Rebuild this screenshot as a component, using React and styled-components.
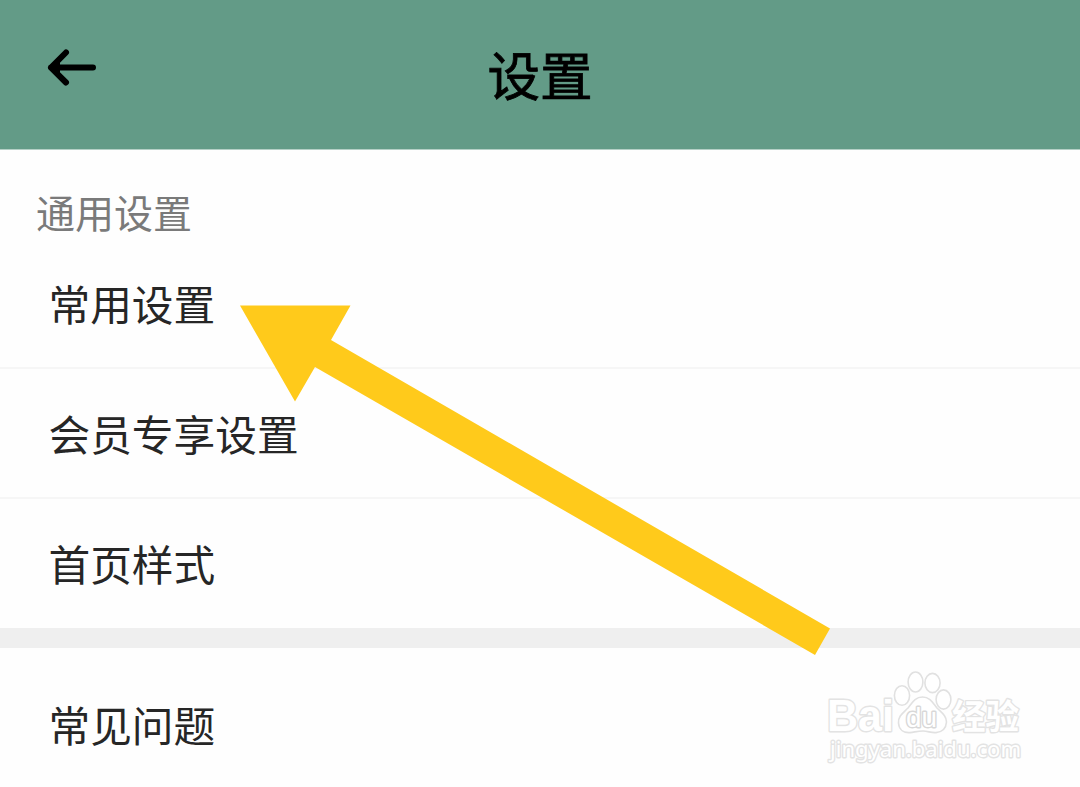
import React from "react";
import styled, { createGlobalStyle } from "styled-components";

const GlobalStyle = createGlobalStyle`
  body {
    margin: 0;
    background: #fefefe;
    font-family: "Noto Sans CJK SC", sans-serif;
  }
`;

const Page = styled.div`
  position: relative;
  width: 1080px;
  height: 787px;
  overflow: hidden;
`;

const Header = styled.header`
  display: grid;
  grid-template-columns: 120px 1fr 120px;
  height: 150px;
  background: #639b87;
  border-bottom: 1px solid #b5d0c6;
  box-sizing: border-box;
`;

const BackButton = styled.button`
  display: flex;
  align-items: flex-start;
  padding: 48px 0 0 46px;
  border: 0;
  background: none;
`;

const Title = styled.h1`
  margin: 0;
  padding-top: 34px;
  font-size: 52.6px;
  line-height: 78px;
  font-weight: 400;
  text-align: center;
  color: #000;
  -webkit-text-stroke: 0.8px #000;
`;

const SectionTitle = styled.h2`
  margin: 0;
  padding: 33px 0 0 36px;
  height: 55px;
  font-size: 39px;
  line-height: 56px;
  font-weight: 400;
  color: #7a7a7a;
`;

const List = styled.ul`
  margin: 0;
  padding: 0;
  list-style: none;
`;

const Row = styled.li`
  display: flex;
  align-items: flex-start;
  box-sizing: border-box;
  height: ${(props) => props.$height}px;
  padding: ${(props) => props.$top}px 0 0 48.5px;
  border-bottom: ${(props) => (props.$line ? "2px solid #f6f6f6" : "0")};
  font-size: 41.7px;
  line-height: 60px;
  color: #262626;
`;

const Divider = styled.div`
  height: 20px;
  background: #efefef;
`;

const Pointer = styled.svg`
  position: absolute;
  top: 0;
  left: 0;
  pointer-events: none;
`;

const Watermark = styled.svg`
  position: absolute;
  left: 815px;
  top: 660px;
  pointer-events: none;
`;

const generalItems = [
  { name: "常用设置", height: 131, top: 35, line: true },
  { name: "会员专享设置", height: 130, top: 34, line: true },
  { name: "首页样式", height: 129, top: 34, line: false },
];

const App = () => {
  return (
    <Page>
      <GlobalStyle />
      <Header>
        <BackButton aria-label="返回">
          <svg width="52" height="40" viewBox="0 0 52 40" fill="none">
            <path
              d="M20 4.5L5 19.6L20 34.5M5 19.6H47"
              stroke="#000"
              strokeWidth="6"
              strokeLinecap="round"
              strokeLinejoin="round"
            />
            <path d="M5 19.6L14 11V28Z" fill="#000" />
          </svg>
        </BackButton>
        <Title>设置</Title>
      </Header>

      <SectionTitle>通用设置</SectionTitle>
      <List>
        {generalItems.map((item) => (
          <Row
            key={item.name}
            $height={item.height}
            $top={item.top}
            $line={item.line}
          >
            {item.name}
          </Row>
        ))}
      </List>
      <Divider />
      <List>
        <Row $height={139} $top={46}>
          常见问题
        </Row>
      </List>

      <Pointer width="1080" height="787" viewBox="0 0 1080 787">
        <path
          d="M240 305.5H350.5L331 340L830 628.5L815 655L315 367L295 401.5Z"
          fill="#ffca1b"
        />
      </Pointer>

      {/* 水印 */}
      <Watermark width="220" height="115" viewBox="0 0 220 115">
        <g fill="#fff" stroke="#e1e1e1" strokeWidth="1.6">
          <ellipse cx="87" cy="35.5" rx="7.6" ry="9.8" />
          <ellipse cx="100.5" cy="22" rx="7.4" ry="10" />
          <ellipse cx="117.5" cy="23" rx="7.6" ry="9.6" />
          <ellipse cx="128.5" cy="39.5" rx="7.4" ry="9.6" />
          <path d="M107.5 37C100 37 97 43 93 48C88 53 83 56 83.5 63C84 70 89 73 95 72.6C100 72 103 71 108 71C113 71 116 73 121 72.6C127 72 131 69 131.5 62C131.5 56 127 53 122 48C118 43 115 37 107.5 37Z" />
        </g>
        <g
          fill="#fff"
          stroke="#e3e3e3"
          strokeWidth="2.8"
          paintOrder="stroke"
          strokeLinejoin="round"
          fontFamily="'Liberation Sans', sans-serif"
        >
          <text
            x="12"
            y="71"
            fontSize="44"
            fontWeight="700"
            textLength="67"
            lengthAdjust="spacingAndGlyphs"
          >
            Bai
          </text>
          <text
            x="91"
            y="67"
            fontSize="27"
            stroke="#d8d8d8"
            textLength="31"
            lengthAdjust="spacingAndGlyphs"
          >
            du
          </text>
          <text
            x="137"
            y="68.5"
            fontSize="34"
            fontWeight="700"
            fontFamily="'Noto Sans CJK SC', sans-serif"
            textLength="67"
            lengthAdjust="spacingAndGlyphs"
          >
            经验
          </text>
          <text
            x="15"
            y="97"
            fontSize="22"
            fontFamily="'Noto Sans', sans-serif"
            textLength="191"
            lengthAdjust="spacingAndGlyphs"
          >
            jingyan.baidu.com
          </text>
        </g>
      </Watermark>
    </Page>
  );
};

export default App;
